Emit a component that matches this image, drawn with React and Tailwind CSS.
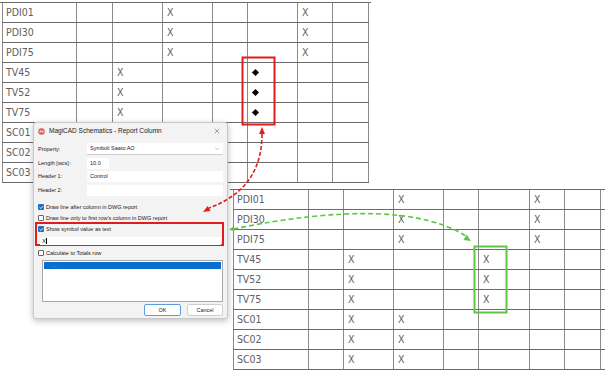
import React from "react";
import { X, ChevronDown, Check } from "lucide-react";

const cad = { fontFamily: '"Liberation Sans Narrow", "DejaVu Sans Condensed", "Liberation Sans", sans-serif' };
const ui = { fontFamily: '"Liberation Sans", Arial, sans-serif' };

const topCols = [75, 36, 50, 50, 35, 50, 35, 36];
const bottomCols = [76, 35, 50, 50, 35, 51, 35, 36, 40];

// SC rows of the top table sit behind the dialog
const topRows = [
  ["PDI01", { 3: "X", 6: "X" }],
  ["PDI30", { 3: "X", 6: "X" }],
  ["PDI75", { 3: "X", 6: "X" }],
  ["TV45", { 2: "X", 5: "D" }],
  ["TV52", { 2: "X", 5: "D" }],
  ["TV75", { 2: "X", 5: "D" }],
  ["SC01", {}],
  ["SC02", {}],
  ["SC03", {}],
];

const bottomRows = [
  ["PDI01", { 3: "X", 6: "X", 8: "X" }],
  ["PDI30", { 3: "X", 6: "X", 8: "X" }],
  ["PDI75", { 3: "X", 6: "X" }],
  ["TV45", { 2: "X", 5: "X" }],
  ["TV52", { 2: "X", 5: "X" }],
  ["TV75", { 2: "X", 5: "X" }],
  ["SC01", { 2: "X", 3: "X" }],
  ["SC02", { 2: "X", 3: "X" }],
  ["SC03", { 2: "X", 3: "X" }],
];

function CadTable({ cols, rows, className }) {
  return (
    <div className={"border-t border-[#6b6b6b] " + className} style={cad}>
      {rows.map(([label, marks]) => (
        <div key={label} className="flex h-[20px] border-b border-[#6b6b6b]">
          {cols.map((w, i) => (
            <div
              key={i}
              style={{ width: w }}
              className={
                "shrink-0 flex items-center pl-[3px] text-[10.5px] text-[#606060] border-r border-[#8a8a8a] " +
                (i === 0 ? "border-l" : "")
              }
            >
              {i === 0 && <span>{label}</span>}
              {marks[i] === "X" && <span className="pl-[1px]">X</span>}
              {marks[i] === "D" && <div className="ml-[2px] w-[5px] h-[5px] rotate-45 bg-black" />}
            </div>
          ))}
        </div>
      ))}
    </div>
  );
}

function Box({ checked }) {
  return checked ? (
    <div className="w-[6px] h-[6px] rounded-[1px] bg-[#1a6fc4] flex items-center justify-center">
      <Check size={5} strokeWidth={4} className="text-white" />
    </div>
  ) : (
    <div className="w-[6px] h-[6px] rounded-[1px] bg-white border border-[#666]" />
  );
}

function CheckRow({ checked, children }) {
  return (
    <div className="flex items-center gap-[2px] h-[8px] text-[5.5px] text-[#222]">
      <Box checked={checked} />
      <span>{children}</span>
    </div>
  );
}

function Field({ label, children }) {
  return (
    <div className="flex items-center">
      <span className="w-[49px] text-[5.5px] text-[#222]">{label}</span>
      {children}
    </div>
  );
}

function Dialog() {
  return (
    <div
      className="absolute left-[33px] top-[122px] w-[195px] h-[197px] flex flex-col bg-[#f3f3f3] border border-[#c8c8c8] rounded-[3px] shadow-[0_2px_6px_rgba(0,0,0,0.25)]"
      style={ui}
    >
      <div className="h-[16px] flex items-center pl-[4px] pr-[6px]">
        <svg width="7" height="7" viewBox="0 0 10 10">
          <circle cx="5" cy="5" r="4.6" fill="#e05454" />
          <path d="M3 6.8 L3 3.6 L5 5.4 L7 3.6 L7 6.8" stroke="#fff" strokeWidth="1.2" fill="none" />
        </svg>
        <span className="ml-[4px] text-[6.5px] text-[#1b1b1b]">MagiCAD Schematics - Report Column</span>
        <X size={8} strokeWidth={1.4} className="ml-auto text-[#333]" />
      </div>

      <div className="flex flex-col pl-[4px] pr-[4px] pt-[4px]">
        <Field label="Property:">
          <div className="flex-1 h-[12px] flex items-center px-[3px] bg-white border-b border-[#cfcfcf] text-[5.5px] text-[#222]">
            Symboli Saato AO
            <ChevronDown size={6} className="ml-auto text-[#888]" />
          </div>
        </Field>
        <div className="h-[3px]" />
        <Field label="Length [wcs]:">
          <div className="w-[22px] h-[11px] flex items-center px-[3px] bg-white text-[5.5px] text-[#222]">10.0</div>
        </Field>
        <div className="h-[2px]" />
        <Field label="Header 1:">
          <div className="flex-1 h-[11px] flex items-center px-[3px] bg-white text-[5.5px] text-[#222]">Control</div>
        </Field>
        <div className="h-[3px]" />
        <Field label="Header 2:">
          <div className="flex-1 h-[11px] bg-white" />
        </Field>

        <div className="mt-[7px] flex flex-col gap-[3px]">
          <CheckRow checked>Draw line after column in DWG report</CheckRow>
          <CheckRow>Draw line only to first row's column in DWG report</CheckRow>
        </div>

        <div className="-ml-[3px] -mr-[1px] h-[24px] border-2 border-[#e21b1b] flex flex-col pl-[1px] pr-[1px] pt-[1px]">
          <CheckRow checked>Show symbol value as text</CheckRow>
          <div className="mt-[4px] ml-[2px] h-[8px] bg-white flex items-center pl-[2px] text-[6px] text-[#222]">
            X<span className="w-[0.5px] h-[6px] bg-black" />
          </div>
        </div>

        <div className="mt-[3px]">
          <CheckRow>Calculate to Totals row</CheckRow>
        </div>

        <div className="mt-[3px] ml-[4px] h-[42px] bg-white border border-[#a9a9a9] p-[1px]">
          <div className="h-[7px] bg-[#0a6ed1] flex items-center pl-[8px] text-[4px] text-[#8fc0ef]">- - -</div>
        </div>

        <div className="mt-[2px] flex justify-end gap-[6px]">
          <div className="w-[37px] h-[12px] flex items-center justify-center bg-white border border-[#5b9be0] rounded-[2px] text-[5.5px] text-[#222]">
            OK
          </div>
          <div className="w-[36px] h-[12px] flex items-center justify-center bg-white border border-[#cfcfcf] rounded-[2px] text-[5.5px] text-[#222]">
            Cancel
          </div>
        </div>
      </div>
    </div>
  );
}

function Overlay() {
  return (
    <svg className="absolute inset-0 pointer-events-none" width="605" height="371" viewBox="0 0 605 371">
      <rect x="242.5" y="57.5" width="32" height="67" fill="none" stroke="#e31b1b" strokeWidth="2" />
      <rect x="474.5" y="246.5" width="32" height="66" fill="none" stroke="#5ec545" strokeWidth="2" />
      <path d="M262,134 C262,170 245,195 209,208" fill="none" stroke="#e31b1b" strokeWidth="1.6" strokeDasharray="4 2" />
      <polygon points="262,127 259,134 265,134" fill="#e31b1b" />
      <polygon points="203,212 210.6,211.1 207.6,205.9" fill="#e31b1b" />
      <path d="M233,229 Q400,195 466,236" fill="none" stroke="#5ec545" strokeWidth="1.6" strokeDasharray="5 3" />
      <polygon points="471,241 463.5,239.9 466.6,234.7" fill="#5ec545" />
      <polygon points="229,229.8 234.5,231.2 233.5,226.3" fill="#5ec545" />
    </svg>
  );
}

export default function App() {
  return (
    <div className="relative w-[605px] h-[371px] overflow-hidden bg-white">
      <CadTable cols={topCols} rows={topRows} className="absolute left-0 top-[2px] pl-[2px] pr-[2px]" />
      <CadTable cols={bottomCols} rows={bottomRows} className="absolute left-[230px] top-[189px] pl-[3px] w-[420px]" />
      <Dialog />
      <Overlay />
    </div>
  );
}
